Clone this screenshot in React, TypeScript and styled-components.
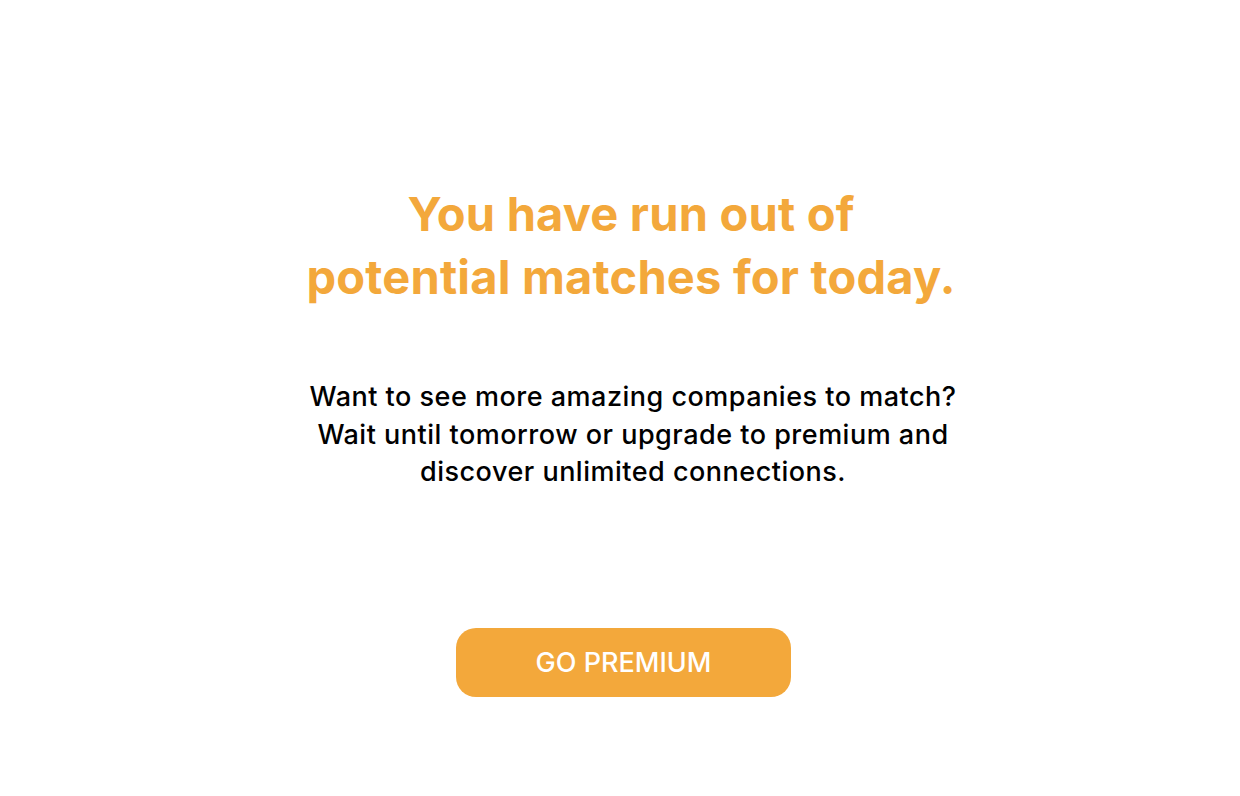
import React from "react";
import styled, { createGlobalStyle } from "styled-components";

const Global = createGlobalStyle`
  html, body { margin: 0; padding: 0; background: #ffffff; }
  body { font-family: Inter, "Noto Sans", sans-serif; }
`;

const Page = styled.main`
  width: 1240px;
  height: 796px;
  display: flex;
  flex-direction: column;
  align-items: center;
  box-sizing: border-box;
  padding-top: 182px;
`;

const Title = styled.h1`
  margin: 0 0 0 22px;
  font-family: Inter, sans-serif;
  font-weight: 700;
  font-size: 47px;
  line-height: 63px;
  color: #f3a83b;
  text-align: center;
  letter-spacing: 0.2px;
`;

const Body = styled.p`
  margin: 70px 0 0 26px;
  font-family: Inter, sans-serif;
  font-weight: 500;
  font-size: 27px;
  line-height: 37.5px;
  color: #000000;
  text-align: center;
  letter-spacing: 0.5px;
`;

const Button = styled.button`
  margin-top: 137px;
  margin-left: 7px;
  width: 335px;
  height: 69px;
  border: none;
  border-radius: 20px;
  background: #f3a83b;
  color: #ffffff;
  font-family: Inter, sans-serif;
  font-weight: 500;
  font-size: 27px;
  letter-spacing: 0px;
  cursor: pointer;
`;

export default function App() {
  return (
    <>
      <Global />
      <Page>
        <Title>
          You have run out of
          <br />
          potential matches for today.
        </Title>
        <Body>
          Want to see more amazing companies to match?
          <br />
          Wait until tomorrow or upgrade to premium and
          <br />
          discover unlimited connections.
        </Body>
        <Button>GO PREMIUM</Button>
      </Page>
    </>
  );
}
